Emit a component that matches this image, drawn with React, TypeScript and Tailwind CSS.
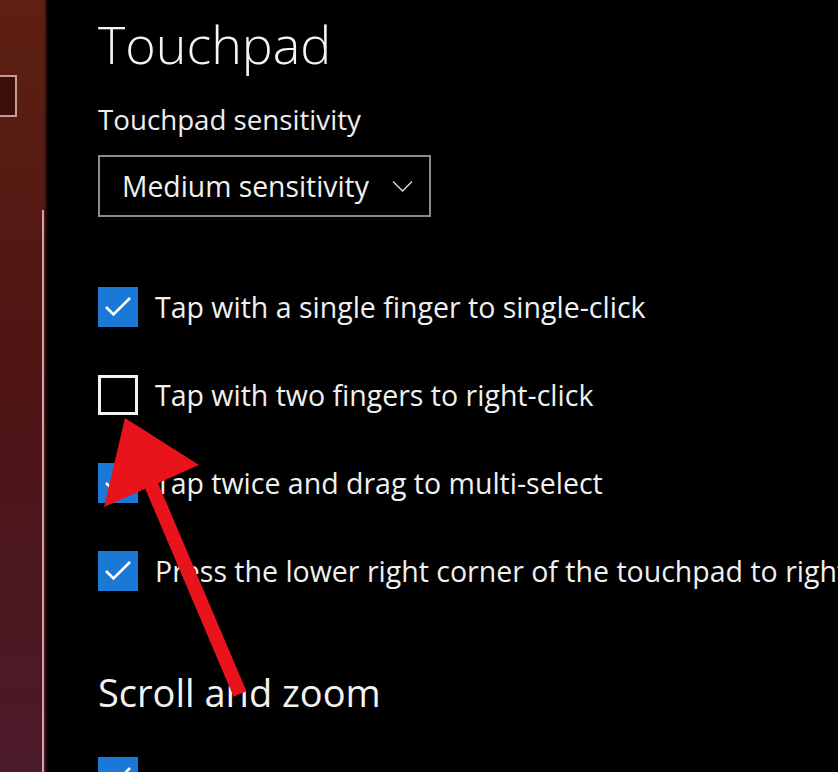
import React from "react";

const font = { fontFamily: '"Open Sans", "Noto Sans", sans-serif' };

function Checked() {
  return (
    <div className="w-[40px] h-[40px] bg-[#1b79d6] shrink-0 flex items-center justify-center">
      <svg width="40" height="40" viewBox="0 0 40 40">
        <polyline points="8,20 15.5,27.5 32,11" fill="none" stroke="#ffffff" strokeWidth="2.6" />
      </svg>
    </div>
  );
}

function Unchecked() {
  return <div className="w-[40px] h-[40px] border-[3px] border-[#f2f2f2] shrink-0" />;
}

function Row({ checked, label }: { checked: boolean; label: string }) {
  return (
    <div className="flex items-center h-[40px] gap-[17px]">
      {checked ? <Checked /> : <Unchecked />}
      <span className="text-[28.5px] text-[#f0f0f0] whitespace-nowrap leading-none">{label}</span>
    </div>
  );
}

export default function App() {
  return (
    <div className="relative w-[838px] h-[772px] overflow-hidden bg-black flex" style={font}>
      <div className="relative w-[48px] h-full shrink-0 bg-gradient-to-b from-[#5e2012] via-[#4d1413] to-[#4b1a2a]">
        <div className="absolute left-0 top-[75px] w-[17px] h-[42px] border-2 border-l-0 border-[#c79a96] bg-[#3c0f0c]" />
        <div className="absolute left-[42px] top-[210px] bottom-0 w-[2px] bg-[#cfa4a6]" />
        <div className="absolute right-0 top-0 bottom-0 w-[4px] bg-gradient-to-r from-transparent to-black" />
      </div>
      <div className="flex-1 pl-[50px] overflow-hidden">
        <div className="text-[52px] font-light text-[#f4f4f4] leading-none pt-[18px] h-[68px] whitespace-nowrap">Touchpad</div>
        <div className="text-[27.7px] text-[#eeeeee] leading-[28px] mt-[37px] h-[28px] whitespace-nowrap">Touchpad sensitivity</div>
        <div className="mt-[22px] w-[333px] h-[62px] border-2 border-[#8c8c8c] flex items-center pl-[22px] gap-[23px]">
          <span className="text-[28.3px] text-[#f0f0f0] leading-none whitespace-nowrap">Medium sensitivity</span>
          <svg width="21" height="12" viewBox="0 0 21 12">
            <polyline points="1,1.5 10.5,11 20,1.5" fill="none" stroke="#dcdcdc" strokeWidth="1.4" />
          </svg>
        </div>
        <div className="mt-[70px] flex flex-col gap-[48px]">
          <Row checked label="Tap with a single finger to single-click" />
          <Row checked={false} label="Tap with two fingers to right-click" />
          <Row checked label="Tap twice and drag to multi-select" />
          <Row checked label="Press the lower right corner of the touchpad to right-click" />
        </div>
        <div className="mt-[82px] h-[38px] text-[38px] text-[#f2f2f2] leading-none whitespace-nowrap">Scroll and zoom</div>
        <div className="mt-[46px]">
          <Checked />
        </div>
      </div>
      <svg className="absolute left-0 top-0" width="838" height="772" viewBox="0 0 838 772">
        <line x1="150" y1="482" x2="240" y2="694" stroke="#e8131b" strokeWidth="14" />
        <polygon points="125,418 104,507 199,465" fill="#e8131b" />
      </svg>
    </div>
  );
}
